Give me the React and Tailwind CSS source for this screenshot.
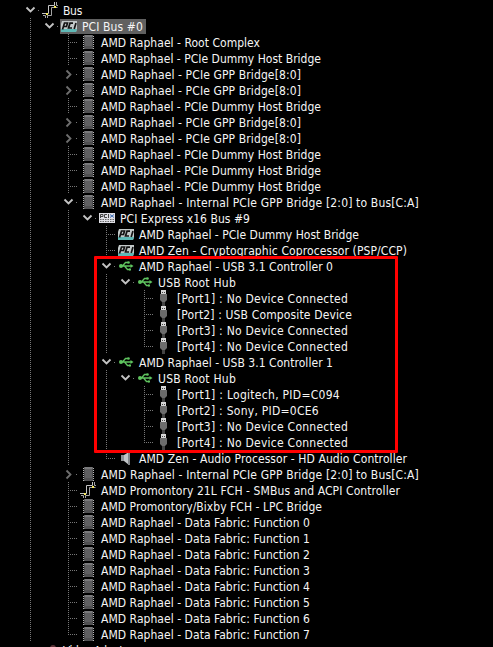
import { useLayoutEffect, useRef, useState } from "react";

const chip = "chip", pci = "pci", usb = "usb", plug = "plug";

// [depth, icon, chevron, label, label width]
const rows = [
  [0, "bus", "open", "Bus", 19],
  [1, pci, "open", "PCI Bus #0", 61, true],
  [2, chip, "", "AMD Raphael - Root Complex", 159],
  [2, chip, "", "AMD Raphael - PCIe Dummy Host Bridge", 220],
  [2, chip, "closed", "AMD Raphael - PCIe GPP Bridge[8:0]", 200],
  [2, chip, "closed", "AMD Raphael - PCIe GPP Bridge[8:0]", 200],
  [2, chip, "", "AMD Raphael - PCIe Dummy Host Bridge", 220],
  [2, chip, "closed", "AMD Raphael - PCIe GPP Bridge[8:0]", 200],
  [2, chip, "closed", "AMD Raphael - PCIe GPP Bridge[8:0]", 200],
  [2, chip, "", "AMD Raphael - PCIe Dummy Host Bridge", 220],
  [2, chip, "", "AMD Raphael - PCIe Dummy Host Bridge", 220],
  [2, chip, "", "AMD Raphael - PCIe Dummy Host Bridge", 220],
  [2, chip, "open", "AMD Raphael - Internal PCIe GPP Bridge [2:0] to Bus[C:A]", 318],
  [3, "express", "open", "PCI Express x16 Bus #9", 130],
  [4, pci, "", "AMD Raphael - PCIe Dummy Host Bridge", 220],
  [4, pci, "", "AMD Zen - Cryptographic Coprocessor (PSP/CCP)", 268],
  [4, usb, "open", "AMD Raphael - USB 3.1 Controller 0", 194],
  [5, usb, "open", "USB Root Hub", 78],
  [6, plug, "", "[Port1] : No Device Connected", 171],
  [6, plug, "", "[Port2] : USB Composite Device", 175],
  [6, plug, "", "[Port3] : No Device Connected", 171],
  [6, plug, "", "[Port4] : No Device Connected", 171],
  [4, usb, "open", "AMD Raphael - USB 3.1 Controller 1", 194],
  [5, usb, "open", "USB Root Hub", 78],
  [6, plug, "", "[Port1] : Logitech, PID=C094", 163],
  [6, plug, "", "[Port2] : Sony, PID=0CE6", 142],
  [6, plug, "", "[Port3] : No Device Connected", 171],
  [6, plug, "", "[Port4] : No Device Connected", 171],
  [4, "speaker", "", "AMD Zen - Audio Processor - HD Audio Controller", 268],
  [2, chip, "closed", "AMD Raphael - Internal PCIe GPP Bridge [2:0] to Bus[C:A]", 318],
  [2, "bus", "", "AMD Promontory 21L FCH - SMBus and ACPI Controller", 299],
  [2, chip, "", "AMD Promontory/Bixby FCH - LPC Bridge", 221],
  ...[0, 1, 2, 3, 4, 5, 6, 7].map((n) => [2, chip, "", `AMD Raphael - Data Fabric: Function ${n}`, 209]),
];

function Label({ text, width }) {
  const ref = useRef(null);
  const [spacing, setSpacing] = useState(0);
  useLayoutEffect(() => {
    setSpacing((width - ref.current.getBoundingClientRect().width) / text.length);
  }, [text, width]);
  return (
    <span ref={ref} className="mt-px whitespace-pre" style={{ letterSpacing: spacing }}>
      {text}
    </span>
  );
}

function Icon({ kind }) {
  if (kind === "chip")
    return (
      <svg width="16" height="16" viewBox="0 0 16 16" shapeRendering="crispEdges">
        <path d="M3.500 2v13M13.500 2v13" stroke="#b5b5b5" strokeDasharray="1 1" />
        <path d="M4 1h9v14H4z" fill="#5f5f61" />
        <path d="M5 1h7v2H5z" fill="#79797b" />
        <path d="M4 3h1v11H4zM12 3h1v11h-1z" fill="#4a4a4c" />
        <path d="M5 12h7v3H5z" fill="#505052" />
      </svg>
    );
  if (kind === "bus")
    return (
      <svg width="16" height="16" viewBox="0 0 16 16" fill="none" strokeWidth="1">
        <path d="M0 11.500h6.500v-8h6V0" stroke="#c4c4c4" />
        <path d="M1 13.500h2.500V16M5.500 16v-2.500h4v-8h6M14.500 0v3.500H16" stroke="#a4a4a4" />
        <path d="M4 11h2v2H4zM12 4h2v2h-2z" fill="#f4e65c" />
      </svg>
    );
  if (kind === "pci")
    return (
      <svg width="16" height="16" viewBox="0 0 16 16" fill="none">
        <path d="M1 3h15v8l-1 3H0V6z" fill="#c3c9c9" />
        <path d="M0 11h16l-1 3H0z" fill="#5fb9b6" />
        <path d="M1.500 11.500L3.500 5h3L5.500 8.500H2.500M12 5.200H9L7.500 10h3.500M15 5l-1.800 6" stroke="#141414" strokeWidth="1.700" />
      </svg>
    );
  if (kind === "express")
    return (
      <svg width="16" height="16" viewBox="0 0 16 16" fill="none">
        <path d="M0 3h16v10H0z" fill="#dedee4" />
        <path d="M1.500 8V4.500H4V6.500H2M8 4.500H5.500V7.500H8M9.500 4v4" stroke="#444" />
        <path d="M11 4.500l4 3M15 4.500l-4 3" stroke="#4070b8" />
        <path d="M1 9.500h14M1 11.500h14" stroke="#666" strokeDasharray="1.500 1" />
      </svg>
    );
  if (kind === "usb")
    return (
      <svg width="16" height="16" viewBox="0 0 16 16" fill="none" stroke="#5fc45f" strokeWidth="1.300">
        <path d="M2 8h11M4.500 8l3-3.500H10M6.500 8l3 3.500H12" />
        <path d="M12.500 6l3 2-3 2z" fill="#5fc45f" stroke="none" />
        <circle cx="3" cy="8" r="2" fill="#5fc45f" stroke="none" />
        <circle cx="10.500" cy="4.500" r="1.300" fill="#5fc45f" stroke="none" />
        <path d="M11 10.500h2v2h-2z" fill="#5fc45f" stroke="none" />
      </svg>
    );
  if (kind === "plug")
    return (
      <svg width="16" height="16" viewBox="0 0 16 16">
        <path d="M5 0h5v5H5z" fill="#d6d6d6" />
        <path d="M6 2h1v1H6zM8 2h1v1H8z" fill="#444" />
        <path d="M4 4h7v6l-2 2H6l-2-2z" fill="#6c6c6c" />
        <path d="M6 12h3v4H6z" fill="#444" />
      </svg>
    );
  return (
    <svg width="16" height="16" viewBox="0 0 16 16">
      <path d="M3 5h3v6H3z" fill="#8e9195" />
      <path d="M6 5l5-3v13l-5-4z" fill="#c1c5c8" />
      <path d="M10 2h2v13h-2z" fill="#808488" />
    </svg>
  );
}

function Chevron({ state }) {
  return (
    <svg className="block" width="19" height="16" viewBox="0 0 19 16" fill="none" strokeWidth="1.800">
      {state === "open" ? (
        <path d="M5.500 5.500l4 4 4-4" stroke="#c4c4c4" />
      ) : (
        <path d="M7.500 4.500l4 4-4 4" stroke="#6e6e6e" />
      )}
      <path d="M17 8.500h2" stroke="#777" strokeWidth="1" strokeDasharray="1 1" shapeRendering="crispEdges" />
    </svg>
  );
}

// Dotted guides for one cell of the tree's gutter.
function Guide({ up, down, branch }) {
  return (
    <svg className="block" width="19" height="16" viewBox="0 0 19 16" shapeRendering="crispEdges" stroke="#777" strokeDasharray="1 1">
      {up && <path d="M9.500 0V8" />}
      {down && <path d="M9.500 8V16" />}
      {branch && <path d="M9 8.500h11" />}
    </svg>
  );
}

function continues(i, depth) {
  for (let j = i + 1; j < rows.length; j++) {
    if (rows[j][0] < depth) return false;
    if (rows[j][0] === depth) return true;
  }
  return depth === 0;
}

export default function App() {
  return (
    <div className="relative h-[647px] w-[493px] overflow-hidden bg-black pt-[2px] font-['DejaVu_Sans_Condensed','Noto_Sans',sans-serif] text-[12px] leading-4 text-[#f5f5f5]">
      {rows.map(([depth, icon, state, label, width, selected], i) => (
        <div key={i} className="flex h-4 items-center pl-[21px]">
          {Array.from({ length: depth }, (_, d) => (
            <div key={d} className="w-[19px] shrink-0">
              {continues(i, d) && d !== 1 && <Guide up down />}
            </div>
          ))}
          <div className="w-[19px] shrink-0">
            {state ? <Chevron state={state} /> : <Guide up down={continues(i, depth)} branch />}
          </div>
          <div className={selected ? "ml-px flex h-[15px] items-center bg-[#606060] pr-[3px]" : "ml-px flex h-4 items-center"}>
            <div className="w-[22px] shrink-0 pl-px">
              <Icon kind={icon} />
            </div>
            <Label text={label} width={width} />
          </div>
        </div>
      ))}
      <div className="flex h-4 pl-[50px]">
        <div className="mt-[3px] mr-[7px] h-3 w-1.5 rounded-full bg-[#5c3438]" />
        <Label text="Video Adapter" width={70} />
      </div>
      <div className="absolute left-[94px] top-[256px] h-[197px] w-[304px] rounded-[1px] border-[3px] border-[#ff0000]" />
    </div>
  );
}
